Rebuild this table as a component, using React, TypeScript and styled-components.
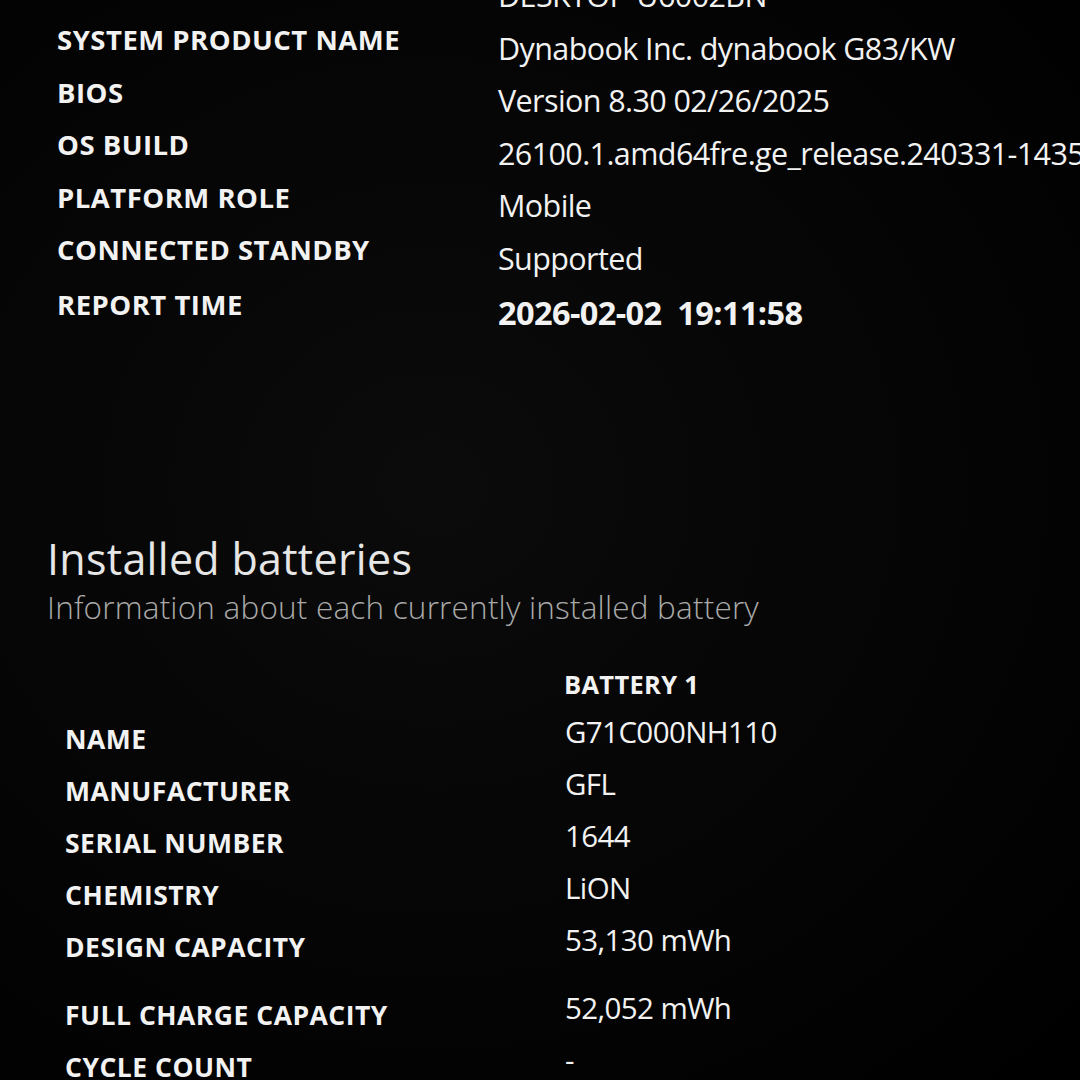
import React from "react";
import styled, { createGlobalStyle } from "styled-components";

const Global = createGlobalStyle`
  html, body {
    margin: 0;
    padding: 0;
    background: #000;
  }
  body {
    width: 1080px;
    height: 1080px;
    overflow: hidden;
    font-family: "Open Sans", "Noto Sans", sans-serif;
    color: #f2f2f2;
  }
`;

const Page = styled.div`
  width: 1080px;
  height: 1080px;
  overflow: hidden;
  background: radial-gradient(ellipse at 40% 45%, #0b0b0b 0%, #040404 60%, #000 100%);
  display: flex;
  flex-direction: column;
`;

const InfoTable = styled.div<{ $left: number; $top: number }>`
  display: flex;
  flex-direction: column;
  padding-left: ${(p) => p.$left}px;
  margin-top: ${(p) => p.$top}px;
`;

const Row = styled.div<{ $height: number; $labelWidth: number; $gap?: number }>`
  display: grid;
  grid-template-columns: ${(p) => p.$labelWidth}px 1fr;
  height: ${(p) => p.$height}px;
  margin-top: ${(p) => p.$gap ?? 0}px;
  flex-shrink: 0;
`;

const Label = styled.div<{ $size: number; $drop: number }>`
  font-size: ${(p) => p.$size}px;
  font-weight: 700;
  letter-spacing: 0.5px;
  text-transform: uppercase;
  white-space: nowrap;
  display: flex;
  align-items: center;
  padding-top: ${(p) => p.$drop}px;
  box-sizing: border-box;
`;

const Value = styled.div<{ $size: number; $drop: number; $bold?: boolean }>`
  font-size: ${(p) => (p.$bold ? p.$size + 2 : p.$size)}px;
  font-weight: ${(p) => (p.$bold ? 700 : 400)};
  white-space: pre;
  display: flex;
  align-items: center;
  padding-top: ${(p) => p.$drop}px;
  box-sizing: border-box;
  letter-spacing: -0.6px;
`;

const Section = styled.section`
  padding-left: 47px;
  margin-top: 208px;
  display: flex;
  flex-direction: column;
`;

const Heading = styled.h2`
  margin: 0;
  font-size: 43px;
  font-weight: 400;
  color: #e6e6e6;
  line-height: 50px;
  letter-spacing: 0.3px;
`;

const Subheading = styled.p`
  margin: 0;
  font-size: 31.5px;
  font-weight: 300;
  color: #a9a9a9;
  line-height: 46px;
  letter-spacing: 0.2px;
`;

const BatteryHeader = styled.div`
  padding-left: 564px;
  margin-top: 37px;
  font-size: 25.5px;
  font-weight: 700;
  letter-spacing: 0.3px;
  line-height: 34px;
`;

const systemRows: [string, string, boolean?][] = [
  ["Computer name", "DESKTOP-U6002BN"],
  ["System product name", "Dynabook Inc. dynabook G83/KW"],
  ["BIOS", "Version 8.30 02/26/2025"],
  ["OS build", "26100.1.amd64fre.ge_release.240331-1435"],
  ["Platform role", "Mobile"],
  ["Connected standby", "Supported"],
  ["Report time", "2026-02-02  19:11:58", true],
];

const batteryRows: [string, string, number][] = [
  ["Name", "G71C000NH110", 0],
  ["Manufacturer", "GFL", 0],
  ["Serial number", "1644", 0],
  ["Chemistry", "LiON", 0],
  ["Design capacity", "53,130 mWh", 0],
  ["Full charge capacity", "52,052 mWh", 16],
  ["Cycle count", "-", 0],
];

export default function App() {
  return (
    <Page>
      <Global />
      <InfoTable $left={57} $top={-42}>
        {systemRows.map(([label, value, bold]) => (
          <Row key={label} $height={52.6} $labelWidth={441}>
            <Label $size={27.5} $drop={0}>{label}</Label>
            <Value $size={30.5} $drop={16} $bold={bold}>{value}</Value>
          </Row>
        ))}
      </InfoTable>
      <Section>
        <Heading>Installed batteries</Heading>
        <Subheading>Information about each currently installed battery</Subheading>
      </Section>
      <BatteryHeader>BATTERY 1</BatteryHeader>
      <InfoTable $left={65} $top={4}>
        {batteryRows.map(([label, value, gap]) => (
          <Row key={label} $height={52} $labelWidth={500} $gap={gap}>
            <Label $size={26.5} $drop={16}>{label}</Label>
            <Value $size={29.5} $drop={0}>{value}</Value>
          </Row>
        ))}
      </InfoTable>
    </Page>
  );
}
